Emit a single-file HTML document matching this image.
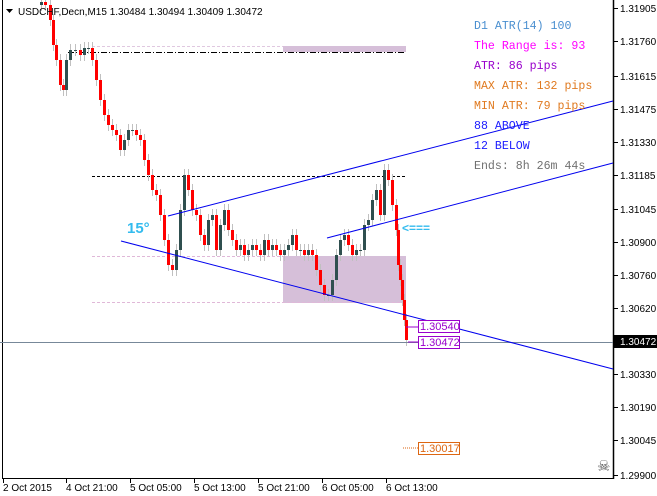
<!DOCTYPE html>
<html><head><meta charset="utf-8"><style>
html,body{margin:0;padding:0;background:#fff;width:657px;height:496px;overflow:hidden}
svg{display:block}
text{font-family:"Liberation Sans",sans-serif;font-size:10px}
.m{font-family:"Liberation Mono",monospace;font-size:11.6px}
</style></head><body>
<svg id="s" width="657" height="496" xmlns="http://www.w3.org/2000/svg">
<rect x="0" y="0" width="657" height="496" fill="#fff"/>
<line x1="2.5" y1="0" x2="2.5" y2="479" stroke="#000"/>
<line x1="2" y1="478.5" x2="614" y2="478.5" stroke="#000"/>
<line x1="613.5" y1="0" x2="613.5" y2="479" stroke="#000" stroke-width="1.5"/>
<rect x="283" y="46" width="123" height="6" fill="#d6bfd9"/>
<rect x="283" y="256" width="123" height="47" fill="#d6bfd9"/>
<line x1="68" y1="52.5" x2="406" y2="52.5" stroke="#000" stroke-dasharray="6,2,1,2"/>
<line x1="92" y1="176.5" x2="406" y2="176.5" stroke="#000" stroke-dasharray="3,2"/>
<line x1="92" y1="256.5" x2="283" y2="256.5" stroke="#e0b8d8" stroke-dasharray="3,2"/>
<line x1="92" y1="302.5" x2="406" y2="302.5" stroke="#e0b8d8" stroke-dasharray="3,2"/>
<line x1="92" y1="46.5" x2="283" y2="46.5" stroke="#e0c8e0" stroke-dasharray="3,2"/>
<g id="c"></g>
<line x1="0" y1="342.5" x2="613" y2="342.5" stroke="#778899"/>
<line x1="168" y1="216" x2="613" y2="101" stroke="#0000ee"/>
<line x1="327" y1="238" x2="613" y2="163" stroke="#0000ee"/>
<line x1="121" y1="241" x2="613" y2="369" stroke="#0000ee"/>
<text x="127" y="233" fill="#33bbee" style="font-weight:bold;font-size:15px">15°</text>
<text x="402" y="232" fill="#33bbee" style="font-weight:bold;font-size:12px">&lt;===</text>
<line x1="406" y1="327" x2="418" y2="327" stroke="#9900cc"/>
<rect x="418.5" y="320.5" width="41" height="12" fill="#fff" stroke="#9900cc"/>
<text x="420" y="330" fill="#9900cc" style="font-size:11px">1.30540</text>
<line x1="408" y1="342" x2="418" y2="342" stroke="#9900cc"/>
<rect x="418.5" y="336.5" width="41" height="12" fill="#fff" stroke="#9900cc"/>
<text x="420" y="346" fill="#9900cc" style="font-size:11px">1.30472</text>
<line x1="403" y1="448" x2="418" y2="448" stroke="#dd6611" stroke-dasharray="1,1"/>
<rect x="418.5" y="442.5" width="41" height="12" fill="#fff" stroke="#dd6611"/>
<text x="420" y="452" fill="#dd6611" style="font-size:11px">1.30017</text>
<text class="m" x="474" y="29" fill="#4a8fd0">D1 ATR(14) 100</text>
<text class="m" x="474" y="49" fill="#ff00ff">The Range is: 93</text>
<text class="m" x="474" y="69" fill="#9900cc">ATR: 86 pips</text>
<text class="m" x="474" y="89" fill="#e07a20">MAX ATR: 132 pips</text>
<text class="m" x="474" y="109" fill="#e07a20">MIN ATR: 79 pips</text>
<text class="m" x="474" y="129" fill="#1a1aff">88 ABOVE</text>
<text class="m" x="474" y="149" fill="#1a1aff">12 BELOW</text>
<text class="m" x="474" y="169" fill="#707070">Ends: 8h 26m 44s</text>
<polygon points="6,9 13,9 9.5,13" fill="#000"/>
<text x="18" y="15" fill="#000">USDCHF,Decn,M15  1.30484 1.30494 1.30409 1.30472</text>
<g id="ax"></g>
<rect x="614" y="335" width="43" height="13" fill="#000"/>
<text x="620" y="345" fill="#fff">1.30472</text>
<text x="597" y="471" fill="#555" style="font-size:15px">☠</text>
<g id="tx"></g>
</svg>
<script>
var ns="http://www.w3.org/2000/svg";
function el(p,t,a,txt){var e=document.createElementNS(ns,t);for(var k in a)e.setAttribute(k,a[k]);if(txt)e.textContent=txt;p.appendChild(e);return e;}
var ax=document.getElementById('ax');
[["1.31905",8],["1.31760",41],["1.31615",76],["1.31475",109],["1.31330",142],["1.31185",175],["1.31045",209],["1.30900",242],["1.30760",275],["1.30620",308],["1.30330",374],["1.30190",407],["1.30045",440],["1.29900",475]].forEach(function(a){
el(ax,'line',{x1:614,y1:a[1]+0.5,x2:618,y2:a[1]+0.5,stroke:'#000'});
el(ax,'text',{x:620,y:a[1]+4,fill:'#000'},a[0]);});
var tx=document.getElementById('tx');
[["2 Oct 2015",3],["4 Oct 21:00",66],["5 Oct 05:00",130],["5 Oct 13:00",194],["5 Oct 21:00",258],["6 Oct 05:00",322],["6 Oct 13:00",386]].forEach(function(a){
el(tx,'line',{x1:a[1]+0.5,y1:479,x2:a[1]+0.5,y2:483,stroke:'#000'});
el(tx,'text',{x:a[1],y:491,fill:'#000'},a[0]);});
var p=[[35,5],[41,2],[45,5],[50,20],[53,45],[56,60],[60,85],[63,90],[66,60],[70,50],[75,50],[80,55],[84,48],[88,48],[92,60],[96,80],[100,100],[104,115],[108,125],[112,130],[116,135],[120,150],[124,140],[128,130],[132,130],[136,135],[140,140],[144,160],[148,175],[152,190],[156,195],[160,215],[164,240],[168,265],[172,270],[176,250],[180,210],[184,175],[188,190],[192,210],[196,215],[200,235],[204,245],[208,220],[212,215],[216,250],[220,225],[224,210],[228,230],[232,240],[236,250],[240,245],[244,255],[248,250],[252,245],[256,250],[260,255],[264,240],[268,250],[272,245],[276,250],[280,255],[284,250],[288,245],[292,235],[296,250],[300,250],[304,255],[308,250],[312,255],[316,270],[320,285],[324,295],[328,295],[332,280],[336,255],[340,240],[344,235],[348,245],[352,255],[356,250],[360,250],[364,225],[368,220],[372,200],[376,190],[380,215],[384,170],[388,180],[392,205],[396,230],[398,265],[400,280],[402,300],[404,320],[406,340]];
var g=document.getElementById('c');
for(var i=1;i<p.length;i++){var x=p[i][0],o=p[i-1][1],c=p[i][1];var t=Math.min(o,c),b=Math.max(o,c);
el(g,'line',{x1:x+0.5,y1:t-6,x2:x+0.5,y2:b+6,stroke:'#c0c0c0'});
el(g,'rect',{x:x-1,y:t,width:3,height:Math.max(b-t,1),fill:c>o?'#ff0000':'#2f4f4f'});}
</script>
</body></html>
